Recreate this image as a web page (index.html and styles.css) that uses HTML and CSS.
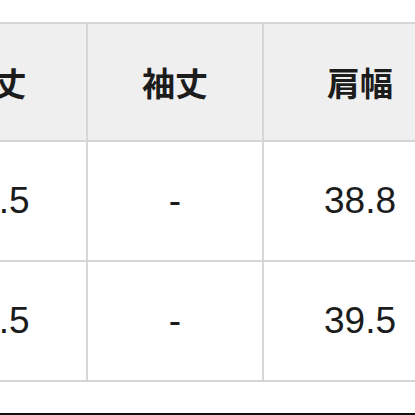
FILE: index.html
```html
<!DOCTYPE html>
<html lang="ja">
<head>
<meta charset="utf-8">
<link rel="stylesheet" href="styles.css">
</head>
<body>
<div class="page">
  <table class="size-table">
    <thead>
      <tr>
        <th class="c1">着丈</th>
        <th class="c2">袖丈</th>
        <th class="c3">肩幅</th>
      </tr>
    </thead>
    <tbody>
      <tr>
        <td>67.5</td>
        <td>-</td>
        <td>38.8</td>
      </tr>
      <tr>
        <td>69.5</td>
        <td>-</td>
        <td>39.5</td>
      </tr>
    </tbody>
  </table>
  <div class="spacer"></div>
  <div class="edge"></div>
</div>
</body>
</html>
```
FILE: styles.css
```css
html, body {
  margin: 0;
  padding: 0;
  background: #ffffff;
  overflow: hidden;
}
.page {
  width: 415px;
  height: 415px;
  display: flex;
  flex-direction: column;
  padding-top: 22px;
  box-sizing: border-box;
  overflow: hidden;
}
.size-table {
  border-collapse: collapse;
  margin-left: -101px;
  table-layout: fixed;
  width: 551px;
  flex: none;
  font-family: "Liberation Sans", Arial, "Noto Sans CJK JP", sans-serif;
  color: #1c1c1c;
}
.size-table th,
.size-table td {
  border: 2px solid #d6d6d6;
  text-align: center;
  vertical-align: middle;
  padding: 0;
}
.size-table th {
  background: #efefef;
  height: 116px;
  font-family: "Noto Sans CJK JP", sans-serif;
  font-weight: 700;
  font-size: 33px;
}
.size-table td {
  height: 118px;
  font-size: 37px;
  font-weight: 400;
}
.c1 { width: 185px; }
.c2 { width: 174px; }
.c3 { width: 192px; }
.spacer {
  flex: 1;
}
.edge {
  height: 2px;
  background: #111111;
  flex: none;
}
```
